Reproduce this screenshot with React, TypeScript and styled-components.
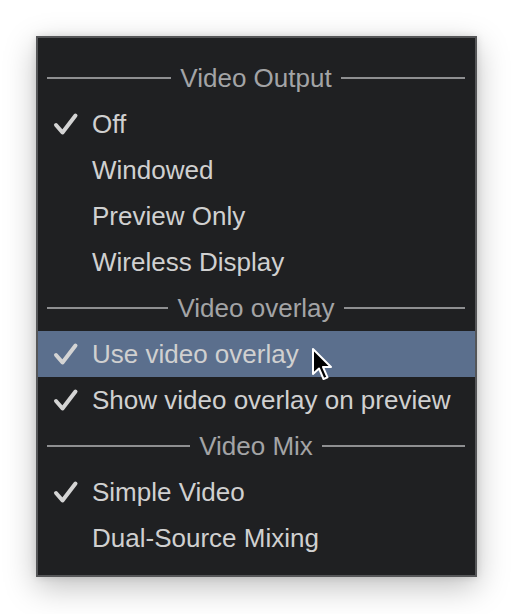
import React from 'react';
import styled, { createGlobalStyle } from 'styled-components';

type Entry =
  | { kind: 'header'; label: string }
  | { kind: 'item'; label: string; checked?: boolean; active?: boolean };

const entries: Entry[] = [
  { kind: 'header', label: 'Video Output' },
  { kind: 'item', label: 'Off', checked: true },
  { kind: 'item', label: 'Windowed' },
  { kind: 'item', label: 'Preview Only' },
  { kind: 'item', label: 'Wireless Display' },
  { kind: 'header', label: 'Video overlay' },
  { kind: 'item', label: 'Use video overlay', checked: true, active: true },
  { kind: 'item', label: 'Show video overlay on preview', checked: true },
  { kind: 'header', label: 'Video Mix' },
  { kind: 'item', label: 'Simple Video', checked: true },
  { kind: 'item', label: 'Dual-Source Mixing' },
];

const CheckMark = () => (
  <svg width="26" height="24" viewBox="0 0 26 24">
    <path
      d="M3 13 L9.5 20.5 L22.5 3.5"
      fill="none"
      stroke="currentColor"
      strokeWidth="4"
      strokeLinecap="round"
      strokeLinejoin="round"
    />
  </svg>
);

const Pointer = () => (
  <svg width="24" height="36" viewBox="0 0 24 36">
    <path
      d="M2 2 L2 27 L8 21.5 L12.5 32 L16.5 30.3 L12 20 L20 20 Z"
      fill="#000"
      stroke="#fff"
      strokeWidth="2"
      strokeLinejoin="round"
    />
  </svg>
);

const App: React.FC = () => (
  <>
    <GlobalStyle />
    <Page>
      <Menu>
        {entries.map((e, i) =>
          e.kind === 'header' ? (
            <Header key={i}>
              <Rule />
              <HeaderLabel>{e.label}</HeaderLabel>
              <Rule />
            </Header>
          ) : (
            <Item key={i} active={!!e.active}>
              <CheckSlot>{e.checked && <CheckMark />}</CheckSlot>
              <Label>{e.label}</Label>
              {e.active && (
                <CursorSpot>
                  <Pointer />
                </CursorSpot>
              )}
            </Item>
          ),
        )}
      </Menu>
    </Page>
  </>
);

export default App;

const GlobalStyle = createGlobalStyle`
  body {
    margin: 0;
    background: #ffffff;
    font-family: 'Liberation Sans', Arial, sans-serif;
  }
`;

const Page = styled.div`
  width: 512px;
  height: 614px;
  padding: 36px 0 0 36px;
  box-sizing: border-box;
`;

const Menu = styled.div`
  width: 441px;
  box-sizing: border-box;
  background: #1f2022;
  border: 2px solid #555658;
  padding: 17px 0 14px;
  display: flex;
  flex-direction: column;
  box-shadow: 0 10px 30px rgba(0, 0, 0, 0.25), 0 0 8px rgba(0, 0, 0, 0.12);
`;

const Header = styled.div`
  height: 46px;
  display: flex;
  align-items: center;
  padding: 0 10px 0 9px;
  gap: 9px;
`;

const Rule = styled.div`
  flex: 1;
  height: 2px;
  background: #8e8f91;
`;

const HeaderLabel = styled.span`
  font-size: 26px;
  color: #a3a4a6;
  white-space: nowrap;
`;

const Item = styled.div<{ active: boolean }>`
  position: relative;
  height: 46px;
  display: flex;
  align-items: center;
  padding-left: 15px;
  background: ${({ active }) => (active ? '#5b6f8d' : 'transparent')};
`;

const CheckSlot = styled.div`
  width: 39px;
  height: 24px;
  display: flex;
  align-items: center;
  color: #d4d4d4;
`;

const Label = styled.span`
  font-size: 26px;
  color: #d0d0d0;
  white-space: nowrap;
`;

const CursorSpot = styled.div`
  position: absolute;
  left: 273px;
  top: 16px;
  line-height: 0;
`;
